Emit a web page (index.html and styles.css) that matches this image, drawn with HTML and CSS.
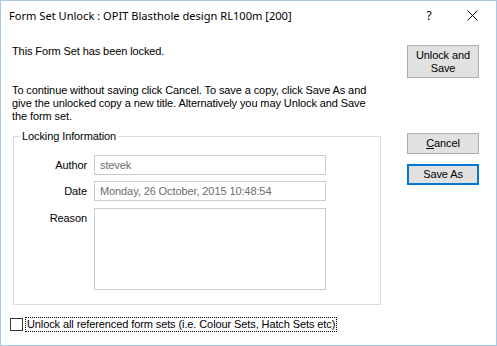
FILE: index.html
```html
<!DOCTYPE html>
<html>
<head>
<meta charset="utf-8">
<link rel="stylesheet" href="styles.css">
</head>
<body>
<div class="window">
  <div class="titlebar">
    <div class="title">Form Set Unlock : OPIT Blasthole design RL100m [200]</div>
    <div class="tb-help">?</div>
    <div class="tb-close">
      <svg width="11" height="11" viewBox="0 0 11 11"><path d="M0.5 0.5 L10.5 10.5 M10.5 0.5 L0.5 10.5" stroke="#000" stroke-width="1" fill="none"/></svg>
    </div>
  </div>
  <div class="content">
    <div class="left">
      <p class="msg1">This Form Set has been locked.</p>
      <p class="msg2">To continue without saving click Cancel. To save a copy, click Save As and give the unlocked copy a new title. Alternatively you may Unlock and Save the form set.</p>
      <fieldset class="group">
        <legend>Locking Information</legend>
        <div class="row">
          <span class="lbl">Author</span>
          <div class="field">stevek</div>
        </div>
        <div class="row row2">
          <span class="lbl">Date</span>
          <div class="field">Monday, 26 October, 2015 10:48:54</div>
        </div>
        <div class="row">
          <span class="lbl">Reason</span>
          <div class="field area"></div>
        </div>
      </fieldset>
      <div class="check">
        <span class="box"></span>
        <span class="check-label">Unlock all referenced form sets (i.e. Colour Sets, Hatch Sets etc)</span>
      </div>
    </div>
    <div class="right">
      <div class="btn tall">Unlock and<br>Save</div>
      <div class="btn cancel"><u>C</u>ancel</div>
      <div class="btn default">Save As</div>
    </div>
  </div>
</div>
</body>
</html>
```
FILE: styles.css
```css
html, body {
  margin: 0;
  padding: 0;
  background: #fff;
}
.window {
  width: 497px;
  height: 346px;
  box-sizing: border-box;
  border: 1px solid #a9c9ea;
  background: #fff;
  font-family: "Liberation Sans", Arial, sans-serif;
  font-size: 11px;
  letter-spacing: -0.1px;
  color: #000;
  display: flex;
  flex-direction: column;
}
.titlebar {
  height: 30px;
  display: flex;
  align-items: center;
  font-family: "Noto Sans", "Open Sans", sans-serif;
  font-size: 11.1px;
  letter-spacing: 0;
  color: #000;
}
.title {
  flex: 1;
  padding-left: 8px;
  padding-bottom: 2px;
}
.tb-help {
  width: 20px;
  text-align: center;
  margin-right: 28px;
  font-size: 12px;
  padding-bottom: 2px;
}
.tb-close {
  width: 11px;
  margin-right: 18px;
  display: flex;
  padding-bottom: 1px;
}
.content {
  flex: 1;
  display: flex;
}
.left {
  width: 370px;
  padding-left: 11px;
}
.msg1 {
  margin: 14px 0 0 0;
  line-height: 13px;
}
.msg2 {
  margin: 26px 0 0 0;
  line-height: 13px;
}
.group {
  margin: 7px 0 0 1px;
  padding: 12px 0 14px 0;
  border: 1px solid #dcdcdc;
  width: 368px;
  box-sizing: border-box;
  height: 175px;
}
.group legend {
  padding: 0 2px;
  margin-left: 6px;
  line-height: 13px;
}
.row {
  display: flex;
  margin-bottom: 6px;
}
.row2 {
  margin-bottom: 7px;
}
.lbl {
  width: 73px;
  text-align: right;
  padding-right: 7px;
  padding-top: 4px;
  line-height: 13px;
}
.field {
  width: 232px;
  height: 20px;
  box-sizing: border-box;
  border: 1px solid #cccccc;
  color: #6d6d6d;
  padding: 3px 0 0 5px;
  line-height: 13px;
}
.field.area {
  height: 82px;
}
.check {
  display: flex;
  align-items: center;
  margin-top: 13px;
  margin-left: -2px;
}
.box {
  width: 13px;
  height: 13px;
  box-sizing: border-box;
  border: 1px solid #333;
  background: #fff;
}
.check-label {
  margin-left: 3px;
  outline: 1px dotted #000;
  outline-offset: 0;
  line-height: 13px;
  padding: 0 1px;
}
.right {
  flex: 1;
  display: flex;
  flex-direction: column;
  padding-left: 25px;
}
.btn {
  width: 72px;
  box-sizing: border-box;
  background: #e1e1e1;
  border: 1px solid #adadad;
  text-align: center;
  line-height: 13px;
}
.btn.tall {
  margin-top: 14px;
  height: 33px;
  padding-top: 3px;
}
.btn.cancel {
  margin-top: 55px;
  height: 21px;
  padding-top: 3px;
}
.btn.default {
  margin-top: 10px;
  height: 21px;
  border: 2px solid #0078d7;
  padding-top: 2px;
}
```
